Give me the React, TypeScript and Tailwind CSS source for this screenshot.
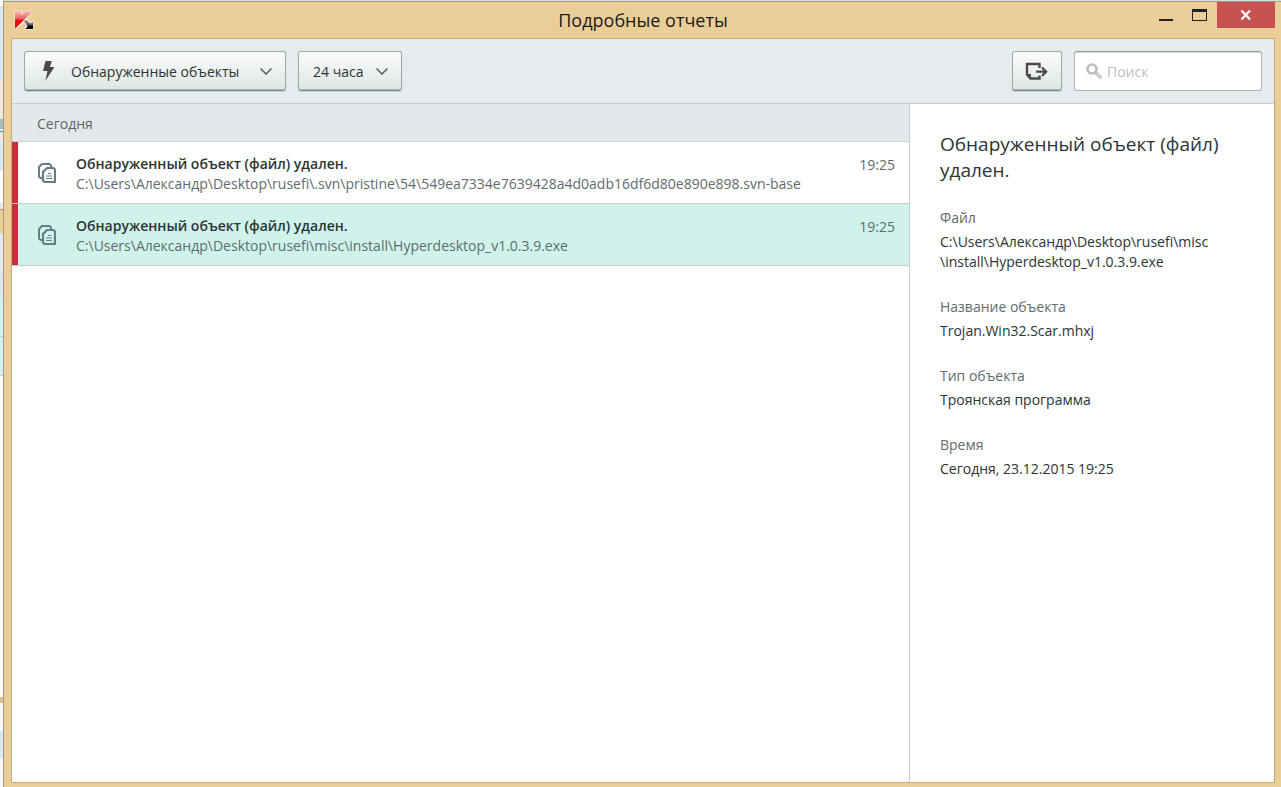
import { useState } from "react";

interface Report {
  id: number;
  title: string;
  path: string;
  time: string;
}

const reports: Report[] = [
  {
    id: 1,
    title: "Обнаруженный объект (файл) удален.",
    path: "C:\\Users\\Александр\\Desktop\\rusefi\\.svn\\pristine\\54\\549ea7334e7639428a4d0adb16df6d80e890e898.svn-base",
    time: "19:25",
  },
  {
    id: 2,
    title: "Обнаруженный объект (файл) удален.",
    path: "C:\\Users\\Александр\\Desktop\\rusefi\\misc\\install\\Hyperdesktop_v1.0.3.9.exe",
    time: "19:25",
  },
];

const details = [
  { label: "Файл", value: ["C:\\Users\\Александр\\Desktop\\rusefi\\misc", "\\install\\Hyperdesktop_v1.0.3.9.exe"] },
  { label: "Название объекта", value: ["Trojan.Win32.Scar.mhxj"] },
  { label: "Тип объекта", value: ["Троянская программа"] },
  { label: "Время", value: ["Сегодня, 23.12.2015 19:25"] },
];

// Slices of the windows that lie behind this one, top to bottom
const backdrop = [
  "h-[6px] bg-white",
  "h-[74px] bg-[#dde7ee]",
  "h-[39px] bg-[#ece8dc]",
  "h-[10px] bg-[#a9bac4]",
  "h-[2px] bg-[#efe9d8]",
  "h-[1px] bg-[#3d8fd0]",
  "h-[8px] bg-[#efe9d8]",
  "h-[31px] bg-[#dce8f0]",
  "h-[32px] bg-white",
  "h-[6px] bg-[#e6eaec]",
  "h-[1px] bg-[#a89468]",
  "h-[23px] bg-[#ebcd98]",
  "h-[41px] bg-[#e2e8eb]",
  "h-[24px] bg-[#dfe6ea]",
  "h-[38px] bg-[#cff2ea]",
  "h-[1px] bg-[#b9cdcb]",
  "h-[38px] bg-[#cff2ea]",
  "h-[1px] bg-[#b9cdcb]",
  "h-[321px] bg-white",
  "h-[6px] bg-[#dcc08c]",
  "h-[28px] bg-[#f8f8f8]",
  "h-[27px] bg-[#dbe6ee]",
  "grow bg-[#f6f6f6]",
];

function KasperskyLogo() {
  return (
    <svg className="size-5" viewBox="0 0 20 20" aria-hidden="true">
      <defs>
        <linearGradient id="kRed" x1="0" y1="0" x2="0" y2="1">
          <stop offset="0" stopColor="#f7c0bd" />
          <stop offset="0.45" stopColor="#ee5a58" />
          <stop offset="0.5" stopColor="#e60d12" />
          <stop offset="1" stopColor="#f01216" />
        </linearGradient>
        <linearGradient id="kArrow" x1="0" y1="0" x2="0" y2="1">
          <stop offset="0" stopColor="#a5a5a5" />
          <stop offset="0.6" stopColor="#555" />
          <stop offset="0.65" stopColor="#000" />
        </linearGradient>
      </defs>
      <path d="M0.5 0.5H8V4L11.5 0.5H19.8L12.5 8.5L16.5 12L19.5 10.5V19.5H10.5L12.5 16L9.5 12.5L2 19.5H0.5Z" fill="#fff6ec" />
      <path d="M1 1H7.2V5L11.8 1H19L1 19Z" fill="url(#kRed)" />
      <path d="M9.8 11.3L11.8 9.6L16.5 13.5L19 11.5V19H11.5L13.6 16.3Z" fill="url(#kArrow)" />
    </svg>
  );
}

function Chevron() {
  return (
    <svg className="pointer-events-none col-start-1 row-start-1 mr-3.5 h-2 w-3 self-center justify-self-end" viewBox="0 0 12 8" aria-hidden="true">
      <path d="M0.5 1.5L6 7L11.5 1.5" fill="none" stroke="#555c5c" strokeWidth="1.5" />
    </svg>
  );
}

function CopyIcon() {
  return (
    <svg className="h-5 w-[18px]" viewBox="0 0 18 20" fill="none" stroke="#6a7c85" aria-hidden="true">
      <path d="M5 15H2.5L1 13.5V4L4 1H11.5L13 2.5V4" strokeWidth="2" />
      <path d="M9 5H15.5L17 6.5V19H6.5L5 17.5V9Z" strokeWidth="2.2" />
      <path d="M10 10.5H13M8 13H14M8 15.5H14" strokeWidth="1" />
    </svg>
  );
}

const controlStyle =
  "h-10 rounded-[3px] border border-[#9aa8a8] border-b-[#75878a] bg-linear-to-b from-[#fbfcfc] to-[#dde6e4] shadow-[inset_0_-1px_0_#a9b8b7,0_1px_1px_#c5cfd0]";

export default function App() {
  const [selected, setSelected] = useState(2);
  const [query, setQuery] = useState("");

  return (
    <div className="flex min-h-screen bg-[#d5dde0] font-['Open_Sans','Noto_Sans',sans-serif] text-sm text-[#2b3433]">
      <div className="flex w-[3px] shrink-0 flex-col" aria-hidden="true">
        {backdrop.map((slice, i) => (
          <div key={i} className={slice} />
        ))}
      </div>

      <div className="mt-px flex min-w-0 grow flex-col border-t border-l border-[#a8977a] bg-[#ebcd98] pr-1.5 pb-1 pl-[7px]">
        {/* Title bar */}
        <header className="grid h-9 grid-cols-[1fr_auto_1fr] items-start">
          <div className="pt-2 pl-[3px]">
            <KasperskyLogo />
          </div>
          <h1 className="pt-1 text-lg leading-7 text-[#1c1a16]">Подробные отчеты</h1>
          <div className="flex justify-end">
            <button type="button" aria-label="Свернуть" className="flex h-[26px] w-[30px] items-center justify-center">
              <svg className="h-4 w-3.5" viewBox="0 0 14 16" aria-hidden="true">
                <path d="M0 12H14V14H0Z" fill="#222" />
              </svg>
            </button>
            <button type="button" aria-label="Развернуть" className="flex h-[26px] w-9 items-center justify-center">
              <svg className="h-3 w-[15px]" viewBox="0 0 15 12" aria-hidden="true">
                <path d="M0 0H15V12H0ZM1 3V11H14V3Z" fill="#222" fillRule="evenodd" />
              </svg>
            </button>
            <button type="button" aria-label="Закрыть" className="flex h-[26px] w-[58px] items-center justify-center bg-[#c75050]">
              <svg className="h-2.5 w-3" viewBox="0 0 12 10" aria-hidden="true">
                <path d="M1.5 0.5L10 9.5M10 0.5L1.5 9.5" stroke="#fff" strokeWidth="2.2" />
              </svg>
            </button>
          </div>
        </header>

        <div className="flex grow flex-col border border-[#c5ab7c] bg-white">
          {/* Toolbar */}
          <div className="flex items-center gap-3 border-b border-[#c3cfd3] bg-[#e6ebed] p-3">
            <div className="grid">
              <svg className="pointer-events-none z-10 col-start-1 row-start-1 ml-[18px] h-5 w-3 self-center" viewBox="0 0 12 20" aria-hidden="true">
                <path d="M3.5 0H9.8L8 6H12.5L3.2 20L5.5 10H1Z" fill="#4a4a4a" />
              </svg>
              <select aria-label="Тип отчета" className={`col-start-1 row-start-1 w-[262px] appearance-none pt-0.5 pl-[46px] ${controlStyle}`}>
                <option>Обнаруженные объекты</option>
              </select>
              <Chevron />
            </div>
            <div className="grid">
              <select aria-label="Период" className={`col-start-1 row-start-1 w-[104px] appearance-none pt-0.5 pl-3.5 ${controlStyle}`}>
                <option>24 часа</option>
              </select>
              <Chevron />
            </div>

            <button type="button" aria-label="Экспортировать" className={`ml-auto flex w-[50px] items-center justify-center ${controlStyle}`}>
              <svg className="h-[18px] w-6" viewBox="0 0 24 18" fill="none" stroke="#4a4a4a" aria-hidden="true">
                <path d="M14.5 6V2H2V12.5L5.5 16.5H14.5V13.5" strokeWidth="2.4" />
                <path d="M1 12H6V17Z" fill="#4a4a4a" stroke="none" />
                <path d="M11 9.7H21M17 5.5L21.2 9.7L17 13.9" strokeWidth="2.2" />
              </svg>
            </button>
            <div className="grid">
              <svg className="pointer-events-none z-10 col-start-1 row-start-1 ml-3 size-4 self-center" viewBox="0 0 16 16" fill="none" stroke="#bdbdbd" aria-hidden="true">
                <circle cx="6" cy="6" r="4.5" strokeWidth="2.6" />
                <path d="M9.5 9.5L14 14" strokeWidth="3.2" strokeLinecap="round" />
                <path d="M10.5 10.5L13.8 13.8" stroke="#eee" strokeWidth="1" />
              </svg>
              <input
                type="search"
                aria-label="Поиск"
                placeholder="Поиск"
                value={query}
                onChange={(e) => setQuery(e.target.value)}
                className="col-start-1 row-start-1 h-10 w-[188px] rounded-[3px] border border-[#a9b6b7] border-t-[#8f9c9e] bg-white pr-3 pl-8 shadow-[inset_0_1px_0_#d5dcdc] placeholder:text-[#bcc0c0]"
              />
            </div>
          </div>

          <div className="flex grow">
            <section className="min-w-0 grow border-r border-[#c3cfd3]">
              <h2 className="border-b border-[#c3cfd3] bg-[#e3e8eb] pt-2.5 pb-[7px] pl-[25px] leading-5 text-[#5c6668]">Сегодня</h2>
              <ul>
                {reports.map((r) => (
                  <li key={r.id} className="border-b border-[#c3cfd3]">
                    <button
                      type="button"
                      onClick={() => setSelected(r.id)}
                      className={`flex w-full items-stretch text-left ${selected === r.id ? "bg-[#cff3eb]" : "bg-white"}`}
                    >
                      <span className="w-1.5 shrink-0 bg-[#c82d3a]" />
                      <span className="flex min-w-0 grow items-start gap-5 pt-3 pr-3.5 pb-[9px] pl-5 leading-5">
                        <span className="shrink-0 pt-[9px]">
                          <CopyIcon />
                        </span>
                        <span className="min-w-0 grow">
                          <span className="block truncate font-semibold">{r.title}</span>
                          <span className="block truncate text-[#5f6b6d]">{r.path}</span>
                        </span>
                        <span className="pt-px text-[#5f6b6d]">{r.time}</span>
                      </span>
                    </button>
                  </li>
                ))}
              </ul>
            </section>

            <aside className="w-[364px] shrink-0 px-[30px] pt-[27px]">
              <h2 className="text-[19px] leading-[26px]">Обнаруженный объект (файл) удален.</h2>
              <dl>
                {details.map((d) => (
                  <div key={d.label} className="mt-[25px] leading-5">
                    <dt className="mb-1 text-[#5f6b6d]">{d.label}</dt>
                    {d.value.map((line) => (
                      <dd key={line}>{line}</dd>
                    ))}
                  </div>
                ))}
              </dl>
            </aside>
          </div>
        </div>
      </div>
    </div>
  );
}
